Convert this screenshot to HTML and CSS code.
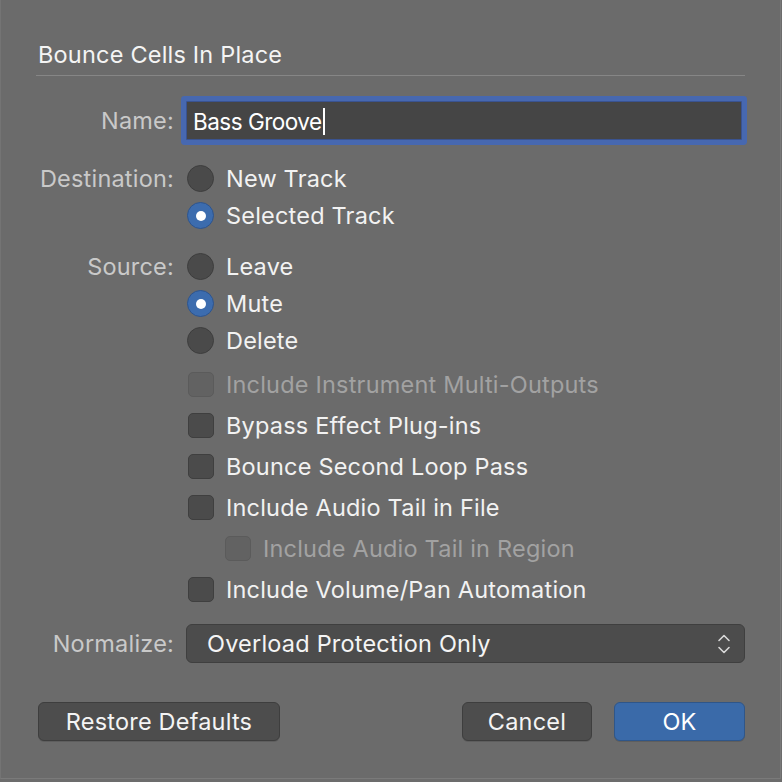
FILE: index.html
```html
<!DOCTYPE html>
<html lang="en">
<head>
<meta charset="utf-8">
<title>Bounce Cells In Place</title>
<link rel="stylesheet" href="styles.css">
</head>
<body>
<div class="window">
  <div class="dialog">
    <h1 class="title">Bounce Cells In Place</h1>
    <div class="sep"></div>

    <div class="row row-name">
      <span class="label">Name:</span>
      <div class="field"><span class="field-text">Bass Groove</span><span class="caret"></span></div>
    </div>

    <div class="group group-dest">
      <div class="row opt">
        <span class="label">Destination:</span>
        <div class="choice"><span class="radio"></span><span class="text">New Track</span></div>
      </div>
      <div class="row opt">
        <span class="label"></span>
        <div class="choice"><span class="radio on"></span><span class="text">Selected Track</span></div>
      </div>
    </div>

    <div class="group group-source">
      <div class="row opt">
        <span class="label">Source:</span>
        <div class="choice"><span class="radio"></span><span class="text">Leave</span></div>
      </div>
      <div class="row opt">
        <span class="label"></span>
        <div class="choice"><span class="radio on"></span><span class="text">Mute</span></div>
      </div>
      <div class="row opt">
        <span class="label"></span>
        <div class="choice"><span class="radio"></span><span class="text">Delete</span></div>
      </div>
    </div>

    <div class="group group-checks">
      <div class="row check">
        <span class="label"></span>
        <div class="choice disabled"><span class="box"></span><span class="text">Include Instrument Multi-Outputs</span></div>
      </div>
      <div class="row check">
        <span class="label"></span>
        <div class="choice"><span class="box"></span><span class="text">Bypass Effect Plug-ins</span></div>
      </div>
      <div class="row check">
        <span class="label"></span>
        <div class="choice"><span class="box"></span><span class="text">Bounce Second Loop Pass</span></div>
      </div>
      <div class="row check">
        <span class="label"></span>
        <div class="choice"><span class="box"></span><span class="text">Include Audio Tail in File</span></div>
      </div>
      <div class="row check">
        <span class="label"></span>
        <div class="choice disabled indent"><span class="box"></span><span class="text">Include Audio Tail in Region</span></div>
      </div>
      <div class="row check">
        <span class="label"></span>
        <div class="choice"><span class="box"></span><span class="text">Include Volume/Pan Automation</span></div>
      </div>
    </div>

    <div class="row row-normalize">
      <span class="label">Normalize:</span>
      <div class="popup">
        <span class="popup-text">Overload Protection Only</span>
        <svg class="chevrons" width="14" height="24" viewBox="0 0 14 24" aria-hidden="true">
          <path d="M2 8.5 L7 3.5 L12 8.5" fill="none" stroke="#d8d8d8" stroke-width="1.6" stroke-linecap="round" stroke-linejoin="round"/>
          <path d="M2 15.5 L7 20.5 L12 15.5" fill="none" stroke="#d8d8d8" stroke-width="1.6" stroke-linecap="round" stroke-linejoin="round"/>
        </svg>
      </div>
    </div>

    <div class="buttons">
      <button class="btn btn-restore">Restore Defaults</button>
      <div class="btn-pair">
        <button class="btn btn-cancel">Cancel</button>
        <button class="btn btn-ok">OK</button>
      </div>
    </div>
  </div>
</div>
</body>
</html>
```

FILE: styles.css
```css
* {
  box-sizing: border-box;
}

html, body {
  margin: 0;
  padding: 0;
}

body {
  background: #6c6c6c;
  font-family: Inter, "Noto Sans", "Liberation Sans", sans-serif;
  font-size: 23.5px;
  letter-spacing: 0.2px;
  color: #f2f2f2;
}

.window {
  width: 781px;
  height: 779px;
  background: #6b6b6b;
  border-left: 1px solid #747474;
  border-right: 1px solid #7a7a7a;
  border-bottom: 1px solid #7a7a7a;
}

.dialog {
  padding: 41px 35px 0 37px;
  display: flex;
  flex-direction: column;
}

.title {
  margin: 0;
  font-size: 23.5px;
  font-weight: 400;
  line-height: 28px;
  height: 28px;
  color: #f4f4f4;
}

.sep {
  height: 1px;
  margin: 6px 0 0 -2px;
  background: #868686;
}

/* label column + control column */
.row {
  display: grid;
  grid-template-columns: 136px 1fr;
  column-gap: 12px;
  align-items: center;
}

.label {
  text-align: right;
  color: #c9c9c9;
  white-space: nowrap;
}

/* name text field with focus ring */
.row-name {
  margin-top: 25px;
  height: 39px;
}

.field {
  height: 39px;
  margin-right: 3px;
  background: #454545;
  border: 1px solid #3a5390;
  box-shadow: 0 0 0 5px #4768b0;
  border-radius: 1px;
  display: flex;
  align-items: center;
  padding: 2px 0 0 6px;
}

.field-text {
  color: #ffffff;
  font-size: 22.5px;
  letter-spacing: -0.5px;
}

.caret {
  width: 2px;
  height: 27px;
  margin-left: 1px;
  background: #ffffff;
}

/* radio and checkbox groups */
.group-dest {
  margin-top: 20px;
}

.group-source {
  margin-top: 14px;
}

.group-checks {
  margin-top: 5px;
}

.opt {
  height: 37px;
}

.check {
  height: 41px;
}

.choice {
  display: flex;
  align-items: center;
  gap: 12px;
}

.choice .text {
  color: #f2f2f2;
  white-space: nowrap;
}

.radio {
  width: 27px;
  height: 27px;
  margin-left: 1px;
  border-radius: 50%;
  background: #4a4a4a;
  border: 1px solid #3d3d3d;
  display: flex;
  align-items: center;
  justify-content: center;
}

.radio.on {
  background: #3c6cae;
  border-color: #2d548e;
}

.radio.on::after {
  content: "";
  width: 10px;
  height: 10px;
  border-radius: 50%;
  background: #ffffff;
}

.box {
  width: 26px;
  height: 25px;
  margin-left: 2px;
  border-radius: 5px;
  background: #4b4b4b;
  border: 1px solid #3f3f3f;
}

.choice.disabled .box {
  background: #626262;
  border-color: #5b5b5b;
}

.choice.disabled .text {
  color: #a2a2a2;
}

.choice.indent {
  padding-left: 37px;
}

/* normalize popup */
.row-normalize {
  margin-top: 14px;
  height: 39px;
}

.popup {
  height: 39px;
  background: #4c4c4c;
  border: 1px solid #3f3f3f;
  border-radius: 6px;
  display: flex;
  align-items: center;
  justify-content: space-between;
  padding: 0 13px 0 20px;
}

.popup-text {
  color: #f4f4f4;
}

.chevrons {
  display: block;
}

/* bottom buttons */
.buttons {
  margin-top: 39px;
  display: flex;
  justify-content: space-between;
  align-items: center;
}

.btn-pair {
  display: flex;
  gap: 22px;
}

.btn {
  height: 39px;
  font-family: inherit;
  font-size: 23.5px;
  letter-spacing: 0.2px;
  color: #f4f4f4;
  background: #4d4d4d;
  border: 1px solid #3e3e3e;
  border-radius: 6px;
  padding: 0;
  box-shadow: 0 1px 0 rgba(0, 0, 0, 0.12);
}

.btn-restore {
  width: 242px;
}

.btn-cancel {
  width: 130px;
}

.btn-ok {
  width: 131px;
  background: #3a6aa9;
  border-color: #2f5689;
  color: #ffffff;
}
```
